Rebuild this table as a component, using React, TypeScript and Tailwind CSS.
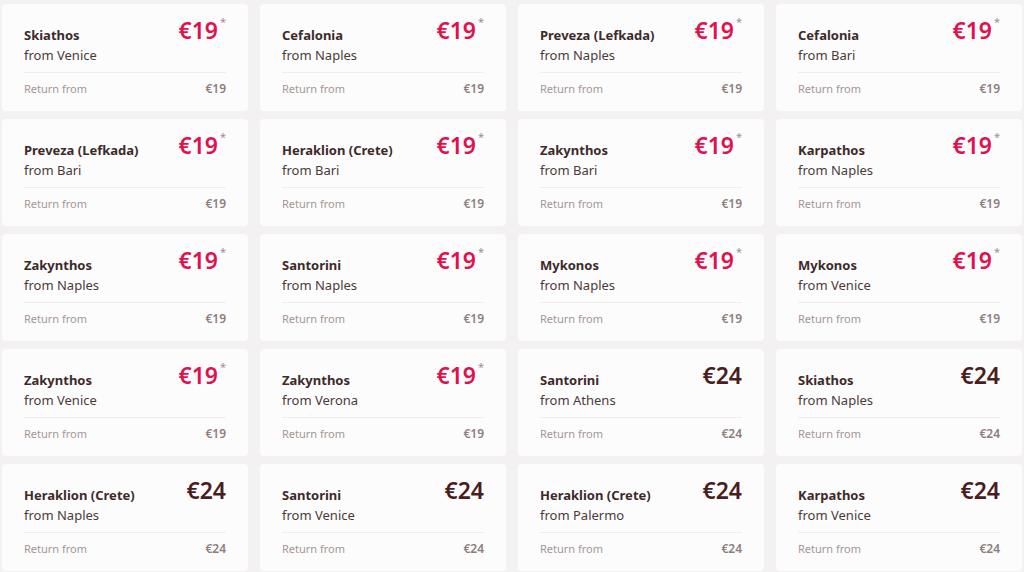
const routes = [
  { to: "Skiathos", from: "Venice", price: 19 },
  { to: "Cefalonia", from: "Naples", price: 19 },
  { to: "Preveza (Lefkada)", from: "Naples", price: 19 },
  { to: "Cefalonia", from: "Bari", price: 19 },
  { to: "Preveza (Lefkada)", from: "Bari", price: 19 },
  { to: "Heraklion (Crete)", from: "Bari", price: 19 },
  { to: "Zakynthos", from: "Bari", price: 19 },
  { to: "Karpathos", from: "Naples", price: 19 },
  { to: "Zakynthos", from: "Naples", price: 19 },
  { to: "Santorini", from: "Naples", price: 19 },
  { to: "Mykonos", from: "Naples", price: 19 },
  { to: "Mykonos", from: "Venice", price: 19 },
  { to: "Zakynthos", from: "Venice", price: 19 },
  { to: "Zakynthos", from: "Verona", price: 19 },
  { to: "Santorini", from: "Athens", price: 24 },
  { to: "Skiathos", from: "Naples", price: 24 },
  { to: "Heraklion (Crete)", from: "Naples", price: 24 },
  { to: "Santorini", from: "Venice", price: 24 },
  { to: "Heraklion (Crete)", from: "Palermo", price: 24 },
  { to: "Karpathos", from: "Venice", price: 24 },
];

interface RouteCardProps {
  to: string;
  from: string;
  price: number;
}

const RouteCard = ({ to, from, price }: RouteCardProps) => {
  const promo = price < 20;
  return (
    <div className="h-[107px] rounded-[4px] bg-[#fdfcfc] px-[22px] pt-3">
      <div className="flex items-start justify-between">
        <div className="pt-[10px]">
          <div className="text-[13px] font-bold leading-[18px] text-[#3d2a2a]">
            {to}
          </div>
          <div className="text-[13px] leading-[22px] text-[#4a3b3b]">
            from {from}
          </div>
        </div>
        {promo ? (
          <div className="flex items-start">
            <span className="text-[23px] font-semibold leading-[28px] text-[#e2104e]">
              €{price}
            </span>
            <span className="ml-[2px] text-[11px] leading-[12px] text-[#9b8f8f]">
              *
            </span>
          </div>
        ) : (
          <span className="text-[23px] font-semibold leading-[28px] text-[#4a1d1f]">
            €{price}
          </span>
        )}
      </div>
      <div className="mt-[6px] flex items-center justify-between border-t border-[#f1eded] pt-2 leading-[16px]">
        <span className="text-[11px] text-[#a39696]">Return from</span>
        <span className="text-[12px] font-semibold text-[#8c7e7e]">€{price}</span>
      </div>
    </div>
  );
};

export default function App() {
  return (
    <div
      className="h-[572px] w-[1024px] overflow-hidden bg-[#f3f1f1] pl-[2px] pt-1"
      style={{ fontFamily: '"Noto Sans", "Open Sans", sans-serif' }}
    >
      <div className="grid grid-cols-[repeat(4,246px)] gap-x-3 gap-y-2">
        {routes.map((r, i) => (
          <RouteCard key={i} {...r} />
        ))}
      </div>
    </div>
  );
}
